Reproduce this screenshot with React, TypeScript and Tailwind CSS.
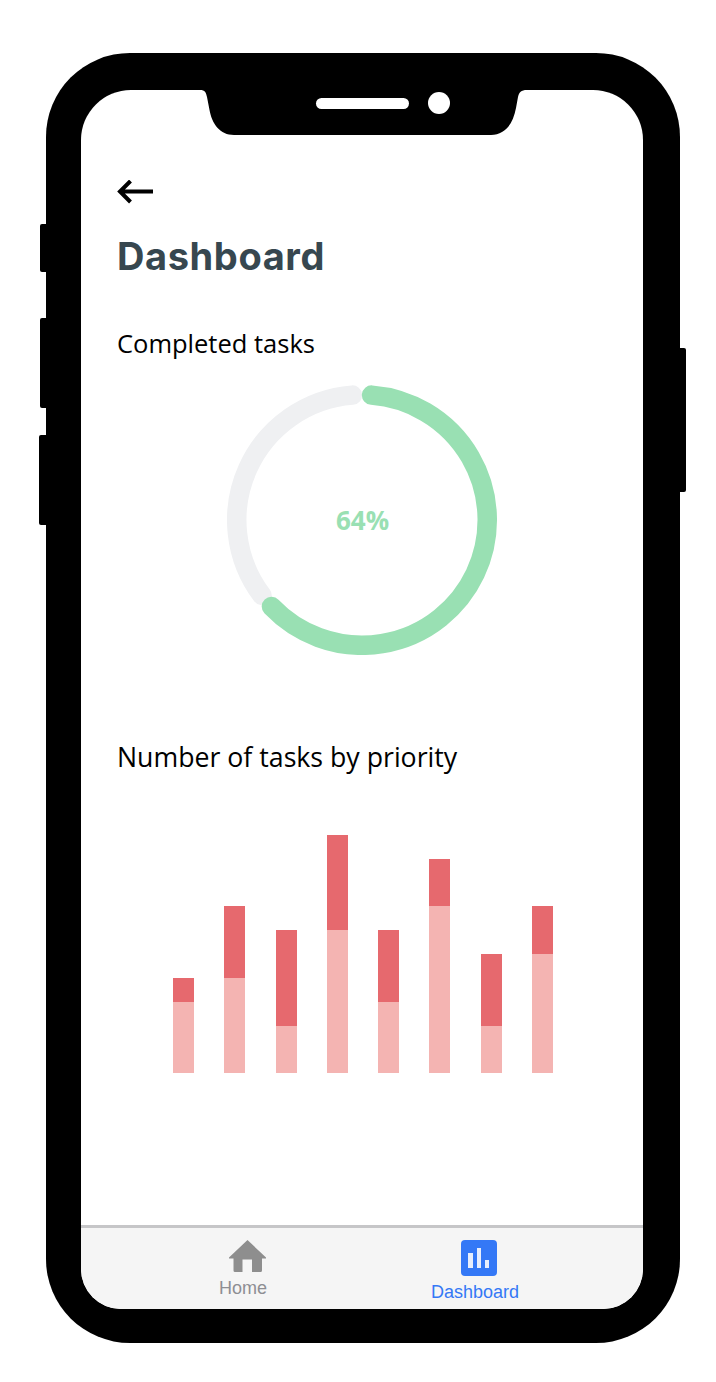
const bars = [
  { dark: 24, light: 71 },
  { dark: 72, light: 95 },
  { dark: 96, light: 47 },
  { dark: 95, light: 143 },
  { dark: 72, light: 71 },
  { dark: 47, light: 167 },
  { dark: 72, light: 47 },
  { dark: 48, light: 119 },
];

function polar(r: number, deg: number, cx = 135, cy = 135) {
  const a = ((deg - 90) * Math.PI) / 180;
  return `${cx + r * Math.cos(a)} ${cy + r * Math.sin(a)}`;
}

function arc(from: number, to: number) {
  const r = 125.25;
  const large = to - from > 180 ? 1 : 0;
  return `M ${polar(r, from)} A ${r} ${r} 0 ${large} 1 ${polar(r, to)}`;
}

export default function App() {
  return (
    <div className="w-[716px] h-[1382px] bg-white relative overflow-hidden">
      <div className="absolute left-[40px] top-[224px] w-[8px] h-[48px] bg-black rounded-l-[2px]" />
      <div className="absolute left-[40px] top-[318px] w-[8px] h-[90px] bg-black rounded-l-[2px]" />
      <div className="absolute left-[39px] top-[435px] w-[9px] h-[90px] bg-black rounded-l-[2px]" />
      <div className="absolute left-[678px] top-[348px] w-[8px] h-[144px] bg-black rounded-r-[2px]" />

      <div className="absolute left-[46px] top-[53px] w-[634px] h-[1290px] bg-black rounded-[84px] pl-[35px] pr-[37px] pt-[37px] pb-[34px]">
        <div className="relative w-[562px] h-[1219px] bg-white rounded-t-[50px] rounded-b-[40px] overflow-hidden flex flex-col font-['Liberation_Sans',sans-serif]">
          <svg className="absolute left-[119px] top-0" width="327" height="46" viewBox="0 0 327 46">
            <path d="M0 0 H327 C321 0 319 2.5 318 7 L316 18 C313 34 305 45 291 45 H34 C20 45 12 34 9.5 20 L7 7 C6 2.5 5 0 0 0 Z" fill="#000" />
            <rect x="116" y="8" width="93" height="11" rx="5.5" fill="#fff" />
            <circle cx="239" cy="13" r="11" fill="#fff" />
          </svg>

          <div className="flex-1 pl-[36px] pt-[90px] flex flex-col items-start">
            <svg width="37" height="24" viewBox="0 0 37 24" className="block">
              <path d="M36 11.5 H3 M13.5 1 L3 11.5 L13.5 22" fill="none" stroke="#000" strokeWidth="4" />
            </svg>
            <h1 className="mt-[29px] text-[38px] leading-[46px] font-bold text-[#37474f] font-['Inter',sans-serif] tracking-[0.6px]">
              Dashboard
            </h1>
            <h2 className="mt-[47px] text-[25.5px] leading-[34px] text-black font-['Open_Sans',sans-serif]">
              Completed tasks
            </h2>

            <div className="relative self-start ml-[110px] mt-[25px] w-[270px] h-[270px]">
              <svg width="270" height="270" viewBox="0 0 270 270" className="block">
                <path d={arc(233, 355.6)} fill="none" stroke="#eff0f2" strokeWidth="19.5" strokeLinecap="round" />
                <path d={arc(4.4, 226.3)} fill="none" stroke="#99e0b3" strokeWidth="19.5" strokeLinecap="round" />
              </svg>
              <div className="absolute inset-0 pl-[1px] flex items-center justify-center text-[26px] font-bold text-[#99e0b3] font-['Open_Sans',sans-serif]">
                64%
              </div>
            </div>

            <h2 className="mt-[84px] text-[26.7px] leading-[36px] text-black font-['Open_Sans',sans-serif]">
              Number of tasks by priority
            </h2>

            <div className="ml-[56px] mt-[60px] flex items-end gap-[30.3px]">
              {bars.map((b, i) => (
                <div key={i} className="w-[21px] flex flex-col">
                  <div className="bg-[#e6696e]" style={{ height: b.dark }} />
                  <div className="bg-[#f4b4b2]" style={{ height: b.light }} />
                </div>
              ))}
            </div>
          </div>

          <div className="h-[84px] shrink-0 bg-[#f5f5f5] border-t-[3px] border-[#c6c6c8] flex items-start">
            <div className="w-[232px] h-full pl-[138px] pt-[12px] flex flex-col items-start">
              <svg width="38" height="32" viewBox="0 0 38 32" className="ml-[10px] block" fill="#8e8e8e">
                <path d="M18.5 0 L37 17.5 V18.5 H33 V30.5 Q33 32 31.5 32 H23 V19.5 H13.5 V32 H6 Q4.5 32 4.5 30.5 V18.5 H0 V17.5 Z" />
              </svg>
              <span className="mt-[5px] text-[18px] leading-[22px] text-[#8e8e93]">Home</span>
            </div>
            <div className="h-full pl-[118px] pt-[12px] flex flex-col items-start">
              <div className="ml-[29.5px] w-[36.5px] h-[36px] rounded-[4px] bg-[#3478f6] flex items-end justify-center gap-[4px] pb-[8px]">
                <div className="w-[4.3px] h-[15px] bg-[#e8eefc]" />
                <div className="w-[4.3px] h-[20px] bg-[#e8eefc]" />
                <div className="w-[4.3px] h-[8px] bg-[#e8eefc]" />
              </div>
              <span className="mt-[4px] text-[18px] leading-[24px] text-[#3478f6]">Dashboard</span>
            </div>
          </div>
        </div>
      </div>
    </div>
  );
}
